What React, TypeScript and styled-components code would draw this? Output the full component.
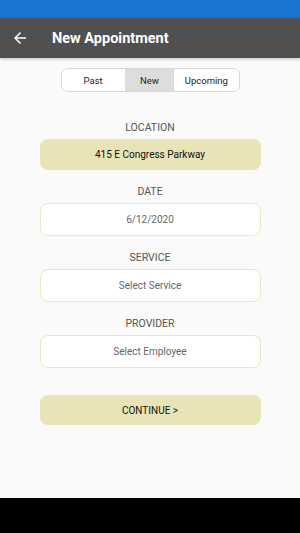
import React, { useState } from "react";
import styled, { createGlobalStyle } from "styled-components";

const Global = createGlobalStyle`
  html, body { margin: 0; padding: 0; background: #fafafa; }
  body { font-family: Roboto, "Liberation Sans", Arial, sans-serif; }
  * { box-sizing: border-box; }
`;

const Screen = styled.div`
  width: 300px;
  height: 533px;
  display: flex;
  flex-direction: column;
  background: #fafafa;
  overflow: hidden;
`;

const StatusBar = styled.div`
  height: 18px;
  background: #1976d2;
  flex-shrink: 0;
`;

const AppBar = styled.div`
  height: 40px;
  background: #505050;
  display: flex;
  align-items: center;
  padding-left: 11px;
  box-shadow: 0 1px 3px rgba(0, 0, 0, 0.25);
  flex-shrink: 0;
  position: relative;
  z-index: 1;
`;

const BackButton = styled.div`
  width: 18px;
  height: 18px;
  display: flex;
  align-items: center;
  justify-content: center;
  margin-right: 23px;
`;

const Title = styled.div`
  color: #ffffff;
  font-size: 14.5px;
  font-weight: 700;
`;

const Content = styled.div`
  flex: 1;
  display: flex;
  flex-direction: column;
  align-items: center;
  padding-top: 10px;
`;

const Segments = styled.div`
  display: flex;
  width: 179px;
  height: 24px;
  border: 1px solid #d6d6d6;
  border-radius: 7px;
  overflow: hidden;
  background: #fff;
`;

const Segment = styled.div<{ $active?: boolean; $w: number }>`
  width: ${(p) => p.$w}px;
  display: flex;
  align-items: center;
  justify-content: center;
  font-size: 9.5px;
  color: #222;
  background: ${(p) => (p.$active ? "#dddddd" : "#ffffff")};
`;

const Form = styled.div`
  width: 221px;
  display: flex;
  flex-direction: column;
  align-items: stretch;
  margin-top: 30px;
`;

const Label = styled.div`
  text-align: center;
  font-size: 10.5px;
  color: #555;
  height: 12px;
  line-height: 12px;
  margin-bottom: 5px;
`;

const Field = styled.div<{ $filled?: boolean }>`
  height: ${(p) => (p.$filled ? 31 : 33)}px;
  border-radius: 8px;
  display: flex;
  align-items: center;
  justify-content: center;
  font-size: 10px;
  color: ${(p) => (p.$filled ? "#111" : "#666")};
  background: ${(p) => (p.$filled ? "#e8e4b7" : "#ffffff")};
  border: ${(p) => (p.$filled ? "none" : "1px solid #efe6bf")};
  margin-bottom: 16px;
`;

const ContinueButton = styled.div`
  height: 30px;
  border-radius: 8px;
  background: #e8e4b7;
  display: flex;
  align-items: center;
  justify-content: center;
  font-size: 10px;
  color: #111;
  margin-top: 11px;
`;

const NavBar = styled.div`
  height: 35px;
  background: #000;
  flex-shrink: 0;
`;

export default function App() {
  const [tab, setTab] = useState("New");
  const tabs: [string, number][] = [
    ["Past", 64],
    ["New", 50],
    ["Upcoming", 65],
  ];
  return (
    <>
      <Global />
      <Screen>
        <StatusBar />
        <AppBar>
          <BackButton>
            <svg width="18" height="18" viewBox="0 0 24 24">
              <path
                d="M20 11H7.83l5.59-5.59L12 4l-8 8 8 8 1.41-1.41L7.83 13H20v-2z"
                fill="#fff"
              />
            </svg>
          </BackButton>
          <Title>New Appointment</Title>
        </AppBar>
        <Content>
          <Segments>
            {tabs.map(([t, w]) => (
              <Segment key={t} $w={w} $active={tab === t} onClick={() => setTab(t)}>
                {t}
              </Segment>
            ))}
          </Segments>
          <Form>
            <Label>LOCATION</Label>
            <Field $filled>415 E Congress Parkway</Field>
            <Label>DATE</Label>
            <Field>6/12/2020</Field>
            <Label>SERVICE</Label>
            <Field>Select Service</Field>
            <Label>PROVIDER</Label>
            <Field>Select Employee</Field>
            <ContinueButton>CONTINUE &gt;</ContinueButton>
          </Form>
        </Content>
        <NavBar />
      </Screen>
    </>
  );
}
